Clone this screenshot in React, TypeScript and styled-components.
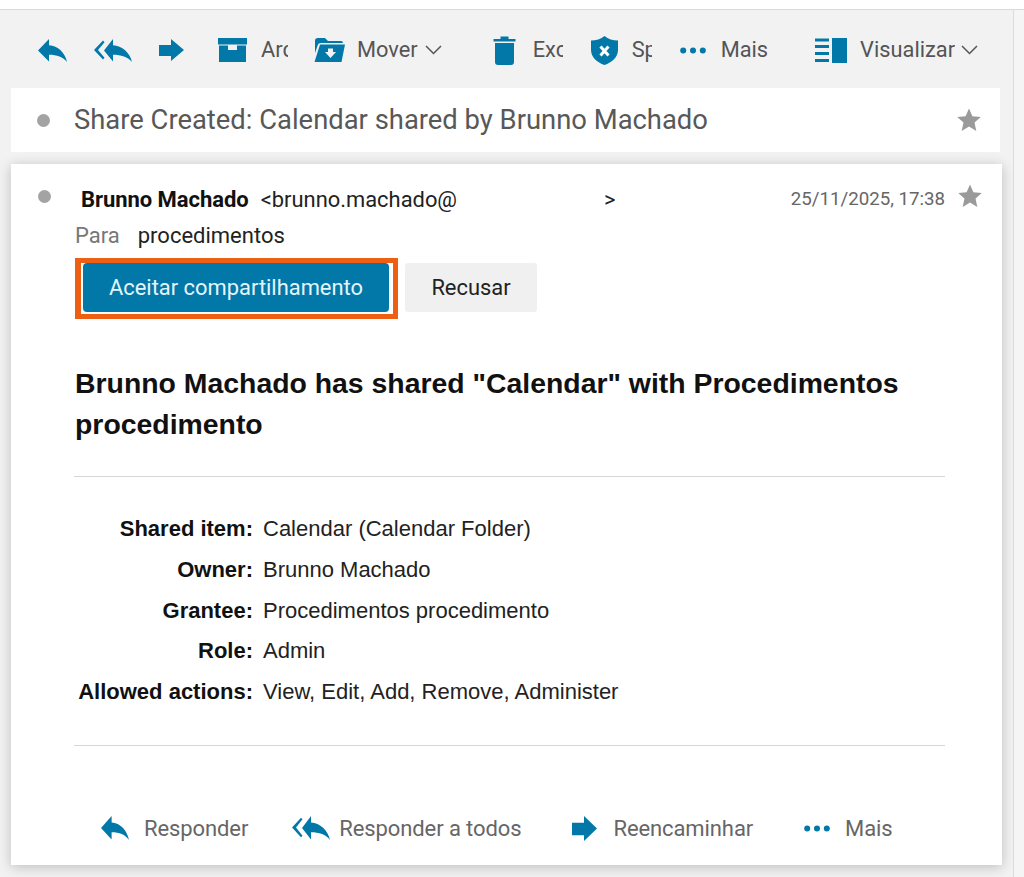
import React from "react";
import styled, { createGlobalStyle } from "styled-components";

const GlobalStyle = createGlobalStyle`
  html, body {
    margin: 0;
    padding: 0;
    background: #ffffff;
    overflow: hidden;
  }
  * { box-sizing: border-box; }
`;

const BLUE = "#0278a9";

const Page = styled.div`
  width: 1024px;
  height: 877px;
  overflow: hidden;
  padding-top: 9px;
  font-family: Roboto, "Liberation Sans", sans-serif;
`;

const Frame = styled.div`
  display: flex;
  height: 868px;
  border-top: 1px solid #d9d9d9;
`;

const Main = styled.main`
  width: 1014px;
  background: #f2f2f2;
  border-right: 1px solid #dcdcdc;
  padding-left: 11px;
  padding-right: 12px;
`;

const ScrollGutter = styled.div`
  flex: 1;
  background: #f5f5f5;
`;

const Toolbar = styled.div`
  display: flex;
  align-items: center;
  height: 78px;
  margin-left: -11px;
  padding: 2px 0 0 38px;
`;

const ToolButton = styled.div<{ $gap?: number; $after: number }>`
  display: flex;
  align-items: center;
  gap: ${(p) => p.$gap ?? 0}px;
  margin-right: ${(p) => p.$after}px;
  color: #555555;
  font-size: 21.8px;
  line-height: 28px;
  flex: none;
`;

const MenuLabel = styled.span<{ $gap: number }>`
  display: flex;
  align-items: center;
  gap: ${(p) => p.$gap}px;
`;

const ToolLabel = styled.span<{ $clip?: number }>`
  display: block;
  white-space: nowrap;
  overflow: hidden;
  ${(p) => (p.$clip ? `width: ${p.$clip}px;` : "")}
`;

const SubjectBar = styled.div`
  display: flex;
  align-items: center;
  height: 64px;
  width: 989px;
  background: #ffffff;
  padding: 0 19px 0 26px;
  margin-bottom: 12px;
`;

const Dot = styled.span`
  flex: none;
  width: 13px;
  height: 13px;
  border-radius: 50%;
  background: #a3a3a3;
`;

const SubjectText = styled.div`
  flex: 1;
  margin-left: 24px;
  font-size: 27.4px;
  color: #585858;
`;

const Card = styled.article`
  width: 991px;
  height: 701px;
  background: #ffffff;
  box-shadow: 0 2px 12px rgba(0, 0, 0, 0.22);
  padding: 20px 57px 0 63px;
  display: flex;
  flex-direction: column;
`;

const SenderRow = styled.div`
  display: flex;
  align-items: center;
  height: 30px;
  position: relative;
`;

const SenderDot = styled(Dot)`
  position: absolute;
  left: -36px;
  top: 6px;
`;

const SenderName = styled.strong`
  margin-left: 7px;
  font-size: 22px;
  font-weight: 700;
  color: #111111;
  letter-spacing: -0.05px;
`;

const SenderMail = styled.span`
  margin-left: 12px;
  font-size: 21.9px;
  color: #222222;
`;

const SenderClose = styled.span`
  margin-left: 147px;
  font-size: 21.9px;
  color: #222222;
`;

const DateText = styled.span`
  margin-left: auto;
  font-size: 18.7px;
  color: #666666;
`;

const CardStar = styled.span`
  position: absolute;
  right: -37px;
  top: 0;
  display: flex;
`;

const RecipientRow = styled.div`
  display: flex;
  align-items: center;
  height: 30px;
  margin-top: 6px;
  padding-left: 1px;
  font-size: 22px;
`;

const RecipientLabel = styled.span`
  color: #777777;
`;

const RecipientName = styled.span`
  margin-left: 18px;
  color: #222222;
`;

const ActionRow = styled.div`
  display: flex;
  align-items: flex-start;
  gap: 7px;
  margin-top: 8px;
  padding-left: 1px;
`;

const AcceptOutline = styled.div`
  display: flex;
  border-style: solid;
  border-color: #ee5f14;
  border-width: 5px 5px 5px 6px;
  padding: 0 4px 2px 2px;
  background: #ffffff;
`;

const AcceptButton = styled.button`
  width: 306px;
  height: 49px;
  border: 0;
  border-radius: 4px;
  background: ${BLUE};
  color: #e4f5fb;
  font-family: inherit;
  font-size: 21.9px;
  padding: 0;
`;

const DeclineButton = styled.button`
  width: 132px;
  height: 49px;
  margin-top: 5px;
  border: 0;
  border-radius: 3px;
  background: #f0f0f0;
  color: #222222;
  font-family: inherit;
  font-size: 21.9px;
  padding: 0;
`;

const BodyTitle = styled.h2`
  margin: 44px 0 0;
  padding-left: 1px;
  font-family: "Liberation Sans", Arial, sans-serif;
  font-size: 28.4px;
  line-height: 41px;
  font-weight: 700;
  color: #111111;
`;

const Rule = styled.hr`
  margin: 0;
  border: 0;
  border-top: 1px solid #d6d6d6;
`;

const TopRule = styled(Rule)`
  margin-top: 31px;
`;

const DetailList = styled.div`
  display: grid;
  grid-template-columns: 179px 1fr;
  column-gap: 10px;
  grid-auto-rows: 40.7px;
  align-items: center;
  margin-top: 32px;
  margin-bottom: 33px;
  font-family: "Liberation Sans", Arial, sans-serif;
  font-size: 22px;
`;

const DetailKey = styled.div`
  font-weight: 700;
  text-align: right;
  color: #111111;
  white-space: nowrap;
`;

const DetailValue = styled.div`
  color: #222222;
`;

const FooterActions = styled.div`
  display: flex;
  align-items: center;
  height: 62px;
  margin-top: 51px;
  padding-left: 27px;
`;

const FooterLabel = styled.span`
  font-size: 22px;
  color: #666666;
  letter-spacing: -0.1px;
`;

const FooterAction = styled.div<{ $gap: number; $after: number }>`
  display: flex;
  align-items: center;
  gap: ${(p) => p.$gap}px;
  margin-right: ${(p) => p.$after}px;
  flex: none;
`;

const Icon = styled.svg`
  display: block;
  flex: none;
  fill: ${BLUE};
`;

const ReplyIcon = ({ w = 29, h = 23 }: { w?: number; h?: number }) => (
  <Icon width={w} height={h} viewBox="0 0 29 22" preserveAspectRatio="none">
    <path d="M0 11 L11 0 V6 C20 6.5 27 13 29 22 C25 17 19 15 11 15 V21.5 Z" />
  </Icon>
);

const ReplyAllIcon = ({ w = 38, h = 23 }: { w?: number; h?: number }) => (
  <Icon width={w} height={h} viewBox="0 0 38 22" preserveAspectRatio="none">
    <path d="M0 10.5 L9 1.5 L10.5 3 L4 10.5 L10.5 18 L9 19.5 Z" />
    <path d="M10 11 L19 0 V6 C28 6.5 36 13 38 22 C34 17 27 15 19 15 V21.5 Z" />
  </Icon>
);

const ForwardIcon = ({ w = 25, h = 22 }: { w?: number; h?: number }) => (
  <Icon width={w} height={h} viewBox="0 0 25 22" preserveAspectRatio="none">
    <path d="M0 6 H12 V0 L25 11 L12 22 V17 H0 Z" />
  </Icon>
);

const ArchiveIcon = () => (
  <Icon width={29} height={24} viewBox="0 0 29 24">
    <path d="M0 0 H29 V6.5 H0 Z" />
    <path d="M1 7.5 H28 V24 H1 Z M10 7.5 V12 H19 V7.5 Z" fillRule="evenodd" />
  </Icon>
);

const MoveIcon = () => (
  <Icon width={31} height={24} viewBox="0 0 31 24">
    <path d="M1 2.5 Q1 0 4 0 H11 L14 3 H27 Q29 3 29 5 H7 Q4 5 3.5 8 L1 15 Z" />
    <path
      d="M6 6.5 H31 L27.5 24 H0.5 Z M14 10.5 V14 H11 L16.5 20 L22 14 H19 V10.5 Z"
      fillRule="evenodd"
    />
  </Icon>
);

const TrashIcon = () => (
  <Icon width={23} height={29} viewBox="0 0 23 29">
    <path d="M0.5 3 H7.5 V0.5 H15.5 V3 H22.5 V5.5 H0.5 Z" />
    <path d="M2 7 H21 V26 Q21 29 18 29 H5 Q2 29 2 26 Z" />
  </Icon>
);

const ShieldIcon = () => (
  <Icon width={27} height={29} viewBox="0 0 27 29">
    <path d="M13.5 0 C17 3 22 4.5 27 4.5 V14 C27 21 21 26.5 13.5 29 C6 26.5 0 21 0 14 V4.5 C5 4.5 10 3 13.5 0 Z" />
    <path
      d="M9.5 10.5 L17.5 19.5 M17.5 10.5 L9.5 19.5"
      stroke="#ffffff"
      strokeWidth="3"
      fill="none"
    />
  </Icon>
);

const DotsIcon = () => (
  <Icon width={26} height={7} viewBox="0 0 26 7">
    <circle cx="3.2" cy="3.5" r="3" />
    <circle cx="13" cy="3.5" r="3" />
    <circle cx="22.8" cy="3.5" r="3" />
  </Icon>
);

const ViewIcon = () => (
  <Icon width={32} height={25} viewBox="0 0 32 25">
    <path d="M0 0.5 H14 V3.5 H0 Z M0 7 H14 V10 H0 Z M0 14 H14 V17 H0 Z M0 21 H14 V24 H0 Z" />
    <path d="M17 0 H32 V25 H17 Z" />
  </Icon>
);

const Chevron = () => (
  <svg width={17} height={10} viewBox="0 0 17 10" style={{ display: "block", flex: "none" }}>
    <path d="M1 1 L8.5 8.5 L16 1" fill="none" stroke="#555555" strokeWidth="1.5" />
  </svg>
);

const Star = () => (
  <svg width={24} height={24} viewBox="0 0 24 24" style={{ display: "block", flex: "none" }}>
    <path
      d="M12 0.5 L15.4 8.2 L23.8 9 L17.5 14.6 L19.3 22.9 L12 18.6 L4.7 22.9 L6.5 14.6 L0.2 9 L8.6 8.2 Z"
      fill="#9a9a9a"
    />
  </svg>
);

const details = [
  ["Shared item:", "Calendar (Calendar Folder)"],
  ["Owner:", "Brunno Machado"],
  ["Grantee:", "Procedimentos procedimento"],
  ["Role:", "Admin"],
  ["Allowed actions:", "View, Edit, Add, Remove, Administer"],
];

export default function App() {
  return (
    <Page>
      <GlobalStyle />
      <Frame>
        <Main>
          <Toolbar>
            <ToolButton $after={27}><ReplyIcon /></ToolButton>
            <ToolButton $after={27}><ReplyAllIcon /></ToolButton>
            <ToolButton $after={34}><ForwardIcon /></ToolButton>
            <ToolButton $gap={14} $after={26}>
              <ArchiveIcon />
              <ToolLabel $clip={27}>Arquivar</ToolLabel>
            </ToolButton>
            <ToolButton $gap={12} $after={51}>
              <MoveIcon />
              <MenuLabel $gap={7}>
                <ToolLabel>Mover</ToolLabel>
                <Chevron />
              </MenuLabel>
            </ToolButton>
            <ToolButton $gap={17} $after={28}>
              <TrashIcon />
              <ToolLabel $clip={30}>Excluir</ToolLabel>
            </ToolButton>
            <ToolButton $gap={14} $after={28}>
              <ShieldIcon />
              <ToolLabel $clip={20}>Spam</ToolLabel>
            </ToolButton>
            <ToolButton $gap={15} $after={47}>
              <DotsIcon />
              <ToolLabel>Mais</ToolLabel>
            </ToolButton>
            <ToolButton $gap={13} $after={0}>
              <ViewIcon />
              <MenuLabel $gap={6}>
                <ToolLabel>Visualizar</ToolLabel>
                <Chevron />
              </MenuLabel>
            </ToolButton>
          </Toolbar>

          <SubjectBar>
            <Dot />
            <SubjectText>Share Created: Calendar shared by Brunno Machado</SubjectText>
            <Star />
          </SubjectBar>

          <Card>
            <SenderRow>
              <SenderDot />
              <SenderName>Brunno Machado</SenderName>
              <SenderMail>&lt;brunno.machado@</SenderMail>
              <SenderClose>&gt;</SenderClose>
              <DateText>25/11/2025, 17:38</DateText>
              <CardStar><Star /></CardStar>
            </SenderRow>
            <RecipientRow>
              <RecipientLabel>Para</RecipientLabel>
              <RecipientName>procedimentos</RecipientName>
            </RecipientRow>
            <ActionRow>
              <AcceptOutline>
                <AcceptButton>Aceitar compartilhamento</AcceptButton>
              </AcceptOutline>
              <DeclineButton>Recusar</DeclineButton>
            </ActionRow>

            <BodyTitle>Brunno Machado has shared "Calendar" with Procedimentos procedimento</BodyTitle>
            <TopRule />
            <DetailList>
              {details.map(([k, v]) => (
                <React.Fragment key={k}>
                  <DetailKey>{k}</DetailKey>
                  <DetailValue>{v}</DetailValue>
                </React.Fragment>
              ))}
            </DetailList>
            <Rule />

            <FooterActions>
              <FooterAction $gap={15} $after={44}>
                <ReplyIcon w={28} h={24} />
                <FooterLabel>Responder</FooterLabel>
              </FooterAction>
              <FooterAction $gap={9} $after={51}>
                <ReplyAllIcon h={24} />
                <FooterLabel>Responder a todos</FooterLabel>
              </FooterAction>
              <FooterAction $gap={16} $after={51}>
                <ForwardIcon h={25} />
                <FooterLabel>Reencaminhar</FooterLabel>
              </FooterAction>
              <FooterAction $gap={15} $after={0}>
                <DotsIcon />
                <FooterLabel>Mais</FooterLabel>
              </FooterAction>
            </FooterActions>
          </Card>
        </Main>
        <ScrollGutter />
      </Frame>
    </Page>
  );
}
